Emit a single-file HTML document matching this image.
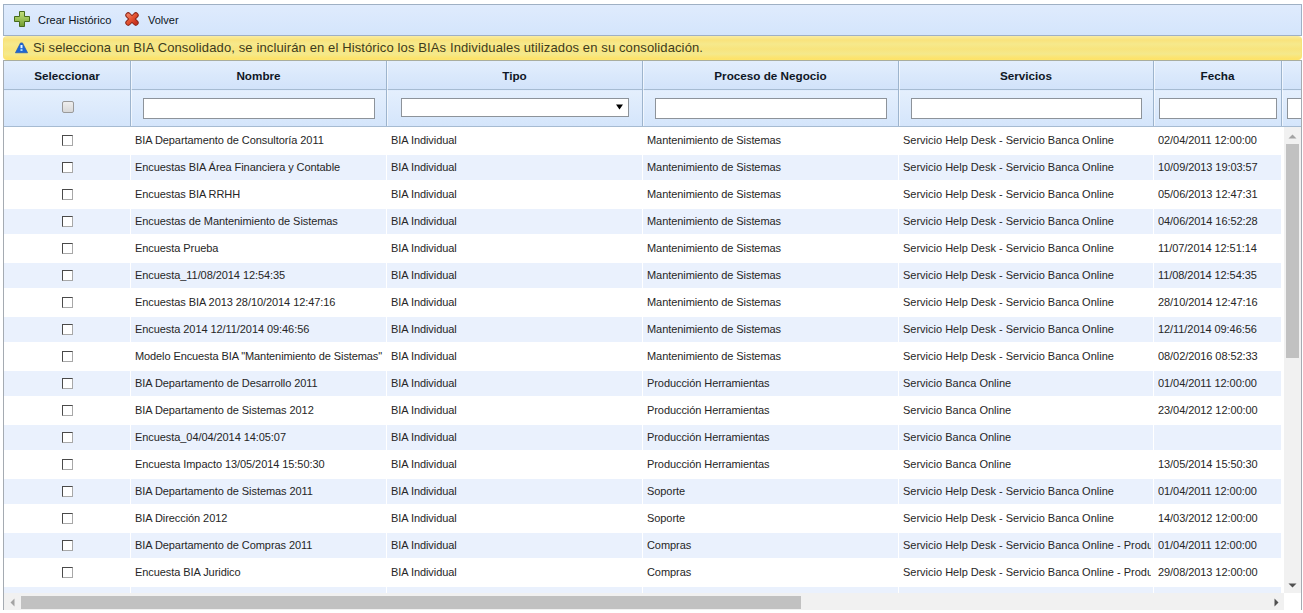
<!DOCTYPE html>
<html><head><meta charset="utf-8">
<style>
*{box-sizing:border-box;margin:0;padding:0}
html,body{width:1303px;height:613px;overflow:hidden;background:#fff;font-family:"Liberation Sans",sans-serif;color:#222}
.tb{position:absolute;left:3px;top:4px;width:1299px;height:32px;border:1px solid #9fb0c4;background:linear-gradient(#dfebfd,#d4e5fc);}
.tb .it{position:absolute;top:9px;font-size:11px;color:#0c1422}
.msg{position:absolute;left:3px;top:36px;width:1299px;height:24px;border:1px solid #f6e27a;border-top-color:#f9eba0;border-bottom-color:#fde46a;border-radius:4px;background:linear-gradient(#f9ea98 0,#f9e37c 3px,#f6e98c 7px,#f8e47d 12px,#f4e98c 17px,#fbe574 20px,#fde26a 22px);}
.msg span{position:absolute;left:29px;top:2.5px;font-size:13px;color:#3d3b1c;letter-spacing:0.12px;white-space:nowrap}
.grid{position:absolute;left:3px;top:60px;width:1299px;height:550px;border-left:1px solid #a5abb2;border-right:1px solid #a5abb2;overflow:hidden}
.hd{position:absolute;left:0;top:0;width:1297px;height:67px;background:linear-gradient(#e3eefd 0,#d2e3fa 28px,#e4effd 30px,#d4e5fb 66px);border-top:1px solid #a9ad9e}
.col{position:absolute;top:0;height:66px;border-right:1px solid #9db4cd;box-shadow:1px 0 0 rgba(255,255,255,0.6)}
.col .t{position:absolute;top:8px;left:0;right:0;text-align:center;font-weight:bold;font-size:11.7px;color:#0f1726}
.hline{position:absolute;left:0;top:28px;width:1297px;height:1px;background:#a6bbd2}
.hline2{position:absolute;left:0;top:65px;width:1297px;height:1px;background:#a6bbd2}
.inp{position:absolute;top:37px;height:21px;border:1px solid #8d939a;background:#fff}
.rows{position:absolute;left:0;top:67px;width:1277px}
.r{position:absolute;left:0;width:1277px;height:27px;font-size:11px;white-space:nowrap;color:#262626;letter-spacing:-0.07px}
.r.a{background:linear-gradient(#eaf1fd,#eaf1fd) 0 1px/100% 25px no-repeat}
.r.a i{position:absolute;top:0;width:1px;height:26px;background:#fff}
.r div{position:absolute;top:7px;overflow:hidden}
.cb{position:absolute;left:58px;top:8px;width:11px;height:11px;border:1px solid #4a4a4a;border-right-color:#a8a8a8;border-bottom-color:#a8a8a8;background:#fff}
.vs{position:absolute;left:1280px;top:67px;width:17px;height:466px;background:#f1f1f1}
.hs{position:absolute;left:0;top:533px;width:1280px;height:17px;background:#f1f1f1}
.th{position:absolute;background:#c1c1c1}
</style></head><body>
<div class="tb">
  <svg style="position:absolute;left:10px;top:6px" width="16" height="16" viewBox="0 0 16 16"><defs><linearGradient id="gp" x1="0" y1="0" x2="0" y2="1"><stop offset="0" stop-color="#c2df7e"/><stop offset="0.5" stop-color="#9cc257"/><stop offset="1" stop-color="#6f9a2e"/></linearGradient></defs><path d="M5.5 0.5h5v5h5v5h-5v5h-5v-5h-5v-5h5z" fill="url(#gp)" stroke="#466a1c" stroke-width="1" stroke-linejoin="round"/></svg>
  <span class="it" style="left:34px">Crear Histórico</span>
  <svg style="position:absolute;left:121px;top:7px" width="15" height="15" viewBox="0 0 15 15"><defs><linearGradient id="gx" x1="0" y1="0" x2="1" y2="1"><stop offset="0" stop-color="#f07a5c"/><stop offset="0.5" stop-color="#e2502f"/><stop offset="1" stop-color="#c9321f"/></linearGradient></defs><path d="M3.2 3.2L10.8 10.8M10.8 3.2L3.2 10.8" stroke="#8a2618" stroke-width="5.8" stroke-linecap="round"/><path d="M3.2 3.2L10.8 10.8M10.8 3.2L3.2 10.8" stroke="url(#gx)" stroke-width="3.8" stroke-linecap="round"/></svg>
  <span class="it" style="left:144px">Volver</span>
</div>
<div class="msg">
  <svg style="position:absolute;left:11px;top:5px" width="13" height="12" viewBox="0 0 13 12"><path d="M5.5 0.9H7.5L12.6 10.8H0.4Z" fill="#1d66d4" stroke="#1b4fa8" stroke-width="0.6" stroke-linejoin="round"/><rect x="5.5" y="3" width="2" height="3.2" fill="#e8f4ff"/><rect x="5.5" y="7.2" width="2" height="1.7" fill="#bfe8ff"/></svg>
  <span>Si selecciona un BIA Consolidado, se incluirán en el Histórico los BIAs Individuales utilizados en su consolidación.</span>
</div>
<div class="grid">
  <div class="hd">
    <div class="hline"></div>
    <div class="col" style="left:0;width:127px"><div class="t">Seleccionar</div></div>
    <div class="col" style="left:127px;width:256px"><div class="t">Nombre</div></div>
    <div class="col" style="left:383px;width:256px"><div class="t">Tipo</div></div>
    <div class="col" style="left:639px;width:256px"><div class="t">Proceso de Negocio</div></div>
    <div class="col" style="left:895px;width:255px"><div class="t">Servicios</div></div>
    <div class="col" style="left:1150px;width:128px"><div class="t">Fecha</div></div>
    <div class="col" style="left:1278px;width:30px"></div>
    <div class="hline2"></div>
    <div class="cb" style="left:58px;top:40px;width:12px;height:12px;border:1px solid #9a9a9a;border-radius:2px;background:linear-gradient(#eee,#d8d8d8)"></div>
    <div class="inp" style="left:139px;width:232px"></div>
    <div class="inp" style="left:397px;width:228px;height:19px"><svg style="position:absolute;left:214px;top:5px" width="7" height="6" viewBox="0 0 7 6"><path d="M0 0.5H7L3.5 5.5z" fill="#000"/></svg></div>
    <div class="inp" style="left:651px;width:232px"></div>
    <div class="inp" style="left:907px;width:231px"></div>
    <div class="inp" style="left:1155px;width:118px"></div>
    <div class="inp" style="left:1283px;width:40px"></div>
  </div>
  <div class="rows">
<div class="r" style="top:0px"><span class="cb"></span><div style="left:131px;width:249px">BIA Departamento de Consultoría 2011</div><div style="left:387px;width:249px">BIA Individual</div><div style="left:643px;width:249px">Mantenimiento de Sistemas</div><div style="left:899px;width:248px;letter-spacing:0">Servicio Help Desk - Servicio Banca Online</div><div style="left:1154px;width:121px">02/04/2011 12:00:00</div></div>
<div class="r a" style="top:27px"><span class="cb"></span><i style="left:126px"></i><i style="left:382px"></i><i style="left:638px"></i><i style="left:894px"></i><i style="left:1149px"></i><i style="left:1277px"></i><div style="left:131px;width:249px">Encuestas BIA Área Financiera y Contable</div><div style="left:387px;width:249px">BIA Individual</div><div style="left:643px;width:249px">Mantenimiento de Sistemas</div><div style="left:899px;width:248px;letter-spacing:0">Servicio Help Desk - Servicio Banca Online</div><div style="left:1154px;width:121px">10/09/2013 19:03:57</div></div>
<div class="r" style="top:54px"><span class="cb"></span><div style="left:131px;width:249px">Encuestas BIA RRHH</div><div style="left:387px;width:249px">BIA Individual</div><div style="left:643px;width:249px">Mantenimiento de Sistemas</div><div style="left:899px;width:248px;letter-spacing:0">Servicio Help Desk - Servicio Banca Online</div><div style="left:1154px;width:121px">05/06/2013 12:47:31</div></div>
<div class="r a" style="top:81px"><span class="cb"></span><i style="left:126px"></i><i style="left:382px"></i><i style="left:638px"></i><i style="left:894px"></i><i style="left:1149px"></i><i style="left:1277px"></i><div style="left:131px;width:249px">Encuestas de Mantenimiento de Sistemas</div><div style="left:387px;width:249px">BIA Individual</div><div style="left:643px;width:249px">Mantenimiento de Sistemas</div><div style="left:899px;width:248px;letter-spacing:0">Servicio Help Desk - Servicio Banca Online</div><div style="left:1154px;width:121px">04/06/2014 16:52:28</div></div>
<div class="r" style="top:108px"><span class="cb"></span><div style="left:131px;width:249px">Encuesta Prueba</div><div style="left:387px;width:249px">BIA Individual</div><div style="left:643px;width:249px">Mantenimiento de Sistemas</div><div style="left:899px;width:248px;letter-spacing:0">Servicio Help Desk - Servicio Banca Online</div><div style="left:1154px;width:121px">11/07/2014 12:51:14</div></div>
<div class="r a" style="top:135px"><span class="cb"></span><i style="left:126px"></i><i style="left:382px"></i><i style="left:638px"></i><i style="left:894px"></i><i style="left:1149px"></i><i style="left:1277px"></i><div style="left:131px;width:249px">Encuesta_11/08/2014 12:54:35</div><div style="left:387px;width:249px">BIA Individual</div><div style="left:643px;width:249px">Mantenimiento de Sistemas</div><div style="left:899px;width:248px;letter-spacing:0">Servicio Help Desk - Servicio Banca Online</div><div style="left:1154px;width:121px">11/08/2014 12:54:35</div></div>
<div class="r" style="top:162px"><span class="cb"></span><div style="left:131px;width:249px">Encuestas BIA 2013 28/10/2014 12:47:16</div><div style="left:387px;width:249px">BIA Individual</div><div style="left:643px;width:249px">Mantenimiento de Sistemas</div><div style="left:899px;width:248px;letter-spacing:0">Servicio Help Desk - Servicio Banca Online</div><div style="left:1154px;width:121px">28/10/2014 12:47:16</div></div>
<div class="r a" style="top:189px"><span class="cb"></span><i style="left:126px"></i><i style="left:382px"></i><i style="left:638px"></i><i style="left:894px"></i><i style="left:1149px"></i><i style="left:1277px"></i><div style="left:131px;width:249px">Encuesta 2014 12/11/2014 09:46:56</div><div style="left:387px;width:249px">BIA Individual</div><div style="left:643px;width:249px">Mantenimiento de Sistemas</div><div style="left:899px;width:248px;letter-spacing:0">Servicio Help Desk - Servicio Banca Online</div><div style="left:1154px;width:121px">12/11/2014 09:46:56</div></div>
<div class="r" style="top:216px"><span class="cb"></span><div style="left:131px;width:249px;letter-spacing:-0.1px">Modelo Encuesta BIA &quot;Mantenimiento de Sistemas&quot;</div><div style="left:387px;width:249px">BIA Individual</div><div style="left:643px;width:249px">Mantenimiento de Sistemas</div><div style="left:899px;width:248px;letter-spacing:0">Servicio Help Desk - Servicio Banca Online</div><div style="left:1154px;width:121px">08/02/2016 08:52:33</div></div>
<div class="r a" style="top:243px"><span class="cb"></span><i style="left:126px"></i><i style="left:382px"></i><i style="left:638px"></i><i style="left:894px"></i><i style="left:1149px"></i><i style="left:1277px"></i><div style="left:131px;width:249px">BIA Departamento de Desarrollo 2011</div><div style="left:387px;width:249px">BIA Individual</div><div style="left:643px;width:249px">Producción Herramientas</div><div style="left:899px;width:248px;letter-spacing:0">Servicio Banca Online</div><div style="left:1154px;width:121px">01/04/2011 12:00:00</div></div>
<div class="r" style="top:270px"><span class="cb"></span><div style="left:131px;width:249px">BIA Departamento de Sistemas 2012</div><div style="left:387px;width:249px">BIA Individual</div><div style="left:643px;width:249px">Producción Herramientas</div><div style="left:899px;width:248px;letter-spacing:0">Servicio Banca Online</div><div style="left:1154px;width:121px">23/04/2012 12:00:00</div></div>
<div class="r a" style="top:297px"><span class="cb"></span><i style="left:126px"></i><i style="left:382px"></i><i style="left:638px"></i><i style="left:894px"></i><i style="left:1149px"></i><i style="left:1277px"></i><div style="left:131px;width:249px">Encuesta_04/04/2014 14:05:07</div><div style="left:387px;width:249px">BIA Individual</div><div style="left:643px;width:249px">Producción Herramientas</div><div style="left:899px;width:248px;letter-spacing:0">Servicio Banca Online</div><div style="left:1154px;width:121px"></div></div>
<div class="r" style="top:324px"><span class="cb"></span><div style="left:131px;width:249px">Encuesta Impacto 13/05/2014 15:50:30</div><div style="left:387px;width:249px">BIA Individual</div><div style="left:643px;width:249px">Producción Herramientas</div><div style="left:899px;width:248px;letter-spacing:0">Servicio Banca Online</div><div style="left:1154px;width:121px">13/05/2014 15:50:30</div></div>
<div class="r a" style="top:351px"><span class="cb"></span><i style="left:126px"></i><i style="left:382px"></i><i style="left:638px"></i><i style="left:894px"></i><i style="left:1149px"></i><i style="left:1277px"></i><div style="left:131px;width:249px">BIA Departamento de Sistemas 2011</div><div style="left:387px;width:249px">BIA Individual</div><div style="left:643px;width:249px">Soporte</div><div style="left:899px;width:248px;letter-spacing:0">Servicio Help Desk - Servicio Banca Online</div><div style="left:1154px;width:121px">01/04/2011 12:00:00</div></div>
<div class="r" style="top:378px"><span class="cb"></span><div style="left:131px;width:249px">BIA Dirección 2012</div><div style="left:387px;width:249px">BIA Individual</div><div style="left:643px;width:249px">Soporte</div><div style="left:899px;width:248px;letter-spacing:0">Servicio Help Desk - Servicio Banca Online</div><div style="left:1154px;width:121px">14/03/2012 12:00:00</div></div>
<div class="r a" style="top:405px"><span class="cb"></span><i style="left:126px"></i><i style="left:382px"></i><i style="left:638px"></i><i style="left:894px"></i><i style="left:1149px"></i><i style="left:1277px"></i><div style="left:131px;width:249px">BIA Departamento de Compras 2011</div><div style="left:387px;width:249px">BIA Individual</div><div style="left:643px;width:249px">Compras</div><div style="left:899px;width:248px;letter-spacing:0">Servicio Help Desk - Servicio Banca Online - Producción Herramientas</div><div style="left:1154px;width:121px">01/04/2011 12:00:00</div></div>
<div class="r" style="top:432px"><span class="cb"></span><div style="left:131px;width:249px">Encuesta BIA Juridico</div><div style="left:387px;width:249px">BIA Individual</div><div style="left:643px;width:249px">Compras</div><div style="left:899px;width:248px;letter-spacing:0">Servicio Help Desk - Servicio Banca Online - Producción Herramientas</div><div style="left:1154px;width:121px">29/08/2013 12:00:00</div></div>
<div class="r a" style="top:459px"><i style="left:126px"></i><i style="left:382px"></i><i style="left:638px"></i><i style="left:894px"></i><i style="left:1149px"></i><i style="left:1277px"></i><div style="left:131px;width:249px"></div><div style="left:387px;width:249px"></div><div style="left:643px;width:249px"></div><div style="left:899px;width:248px;letter-spacing:0"></div><div style="left:1154px;width:121px"></div></div>
</div>
  <div class="vs">
    <svg style="position:absolute;left:4px;top:7px" width="9" height="5" viewBox="0 0 9 5"><path d="M0.5 4.5L4.5 0.5 8.5 4.5z" fill="#a3a3a3"/></svg>
    <div class="th" style="left:2px;top:17px;width:13px;height:214px"></div>
    <svg style="position:absolute;left:4px;top:456px" width="9" height="5" viewBox="0 0 9 5"><path d="M0.5 0.5L4.5 4.5 8.5 0.5z" fill="#505050"/></svg>
  </div>
  <div class="hs">
    <svg style="position:absolute;left:6px;top:5px" width="5" height="9" viewBox="0 0 5 9"><path d="M4.5 0.5L0.5 4.5 4.5 8.5z" fill="#a3a3a3"/></svg>
    <div class="th" style="left:17px;top:3px;width:780px;height:13px"></div>
    <svg style="position:absolute;left:1270px;top:5px" width="5" height="9" viewBox="0 0 5 9"><path d="M0.5 0.5L4.5 4.5 0.5 8.5z" fill="#505050"/></svg>
  </div>
</div>
</body></html>
